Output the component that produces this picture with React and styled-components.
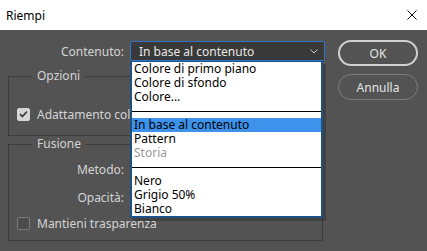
import React from 'react';
import styled, { createGlobalStyle } from 'styled-components';

const GlobalStyle = createGlobalStyle`
  html, body {
    margin: 0;
    padding: 0;
    background: #535353;
  }
  body {
    font-family: 'Noto Sans', 'Open Sans', sans-serif;
    font-size: 12px;
  }
`;

const Dialog = styled.div`
  position: relative;
  width: 427px;
  height: 251px;
  background: #535353;
  overflow: hidden;
`;

const TitleBar = styled.div`
  display: flex;
  align-items: center;
  justify-content: space-between;
  height: 30px;
  padding: 0 10px 0 6px;
  background: #ffffff;
  color: #000;
  font-size: 12px;
`;

const CloseButton = styled.div`
  display: flex;
  width: 10px;
  height: 10px;
`;

const Body = styled.div`
  display: flex;
  flex-direction: row;
  align-items: flex-start;
`;

const FormColumn = styled.div`
  display: flex;
  flex-direction: column;
  width: 315px;
  padding: 11px 0 0 8px;
`;

const Row = styled.div`
  display: flex;
  flex-direction: row;
  align-items: center;
  height: ${({ h }) => h || 20}px;
  margin-top: ${({ mt }) => mt || 0}px;
`;

const Label = styled.div`
  width: ${({ w }) => w || 122}px;
  padding-right: 6px;
  box-sizing: border-box;
  text-align: right;
  color: #d4d4d4;
  white-space: nowrap;
`;

const Select = styled.div`
  display: flex;
  align-items: center;
  justify-content: space-between;
  box-sizing: border-box;
  width: 195px;
  height: 20px;
  margin-right: -10px;
  padding: 0 6px 0 8px;
  background: #393939;
  border: 1px solid #2f74c8;
  border-radius: 2px;
  color: #e8e8e8;
`;

const Group = styled.div`
  margin-top: ${({ mt }) => mt || 0}px;
  padding: 0 0 0 8px;
  height: ${({ h }) => h}px;
  box-sizing: border-box;
  border: 1px solid #3c3c3c;
  display: flex;
  flex-direction: column;
  align-items: flex-start;
`;

const Legend = styled.span`
  margin: -8px 0 0 15px;
  padding: 0 5px;
  background: #535353;
  color: #d4d4d4;
  line-height: 14px;
`;

const CheckRow = styled.label`
  display: flex;
  align-items: center;
  gap: 7px;
  height: 16px;
  color: #d4d4d4;
  white-space: nowrap;
  margin-top: ${({ mt }) => mt || 0}px;
`;

const Box = styled.span`
  display: flex;
  align-items: center;
  justify-content: center;
  width: 13px;
  height: 13px;
  box-sizing: border-box;
  border-radius: 2px;
  background: ${({ checked }) => (checked ? '#d6d6d6' : '#4b4b4b')};
  border: 1px solid ${({ checked }) => (checked ? '#d6d6d6' : '#7a7a7a')};
`;

const ButtonColumn = styled.div`
  display: flex;
  flex-direction: column;
  gap: 8px;
  padding: 10px 0 0 15px;
`;

const Button = styled.div`
  display: flex;
  align-items: center;
  justify-content: center;
  box-sizing: border-box;
  width: 80px;
  height: 26px;
  border-radius: 13px;
  border: ${({ primary }) => (primary ? '2px solid #d0d0d0' : '1px solid #7c7c7c')};
  color: #e6e6e6;
  font-size: 12px;
`;

const Menu = styled.div`
  position: absolute;
  left: 130px;
  top: 61px;
  width: 193px;
  box-sizing: border-box;
  background: #ffffff;
  border: 2px solid #1d5286;
  border-top-width: 1px;
  box-shadow: 3px 3px 0 rgba(0, 0, 0, 0.22);
  display: flex;
  flex-direction: column;
`;

const Item = styled.div`
  height: 14px;
  line-height: 14px;
  padding-left: 2px;
  color: ${({ disabled }) => (disabled ? '#9a9a9a' : '#000')};
  background: ${({ active }) => (active ? '#3d92ec' : 'transparent')};
  white-space: nowrap;
`;

const Separator = styled.div`
  height: 14px;
  display: flex;
  align-items: center;
  &::after {
    content: '';
    flex: 1;
    height: 1px;
    background: #000;
  }
`;

const Check = () => (
  <svg width="9" height="8" viewBox="0 0 9 8">
    <path d="M1 4.2 L3.4 6.5 L8 1.5" fill="none" stroke="#3a3a3a" strokeWidth="1.8" />
  </svg>
);

const Chevron = () => (
  <svg width="8" height="5" viewBox="0 0 8 5">
    <path d="M0.5 0.5 L4 4 L7.5 0.5" fill="none" stroke="#c8c8c8" strokeWidth="1" />
  </svg>
);

export default function App() {
  return (
    <>
      <GlobalStyle />
      <Dialog>
        <TitleBar>
          <span>Riempi</span>
          <CloseButton>
            <svg width="10" height="10" viewBox="0 0 10 10">
              <path d="M0.5 0.5 L9.5 9.5 M9.5 0.5 L0.5 9.5" stroke="#111" strokeWidth="1" />
            </svg>
          </CloseButton>
        </TitleBar>
        <Body>
          <FormColumn>
            <Row>
              <Label>Contenuto:</Label>
              <Select>
                <span>In base al contenuto</span>
                <Chevron />
              </Select>
            </Row>
            <Group mt={15} h={60}>
              <Legend>Opzioni</Legend>
              <CheckRow mt={23}>
                <Box checked>
                  <Check />
                </Box>
                Adattamento colore
              </CheckRow>
            </Group>
            <Group mt={8} h={97}>
              <Legend>Fusione</Legend>
              <Row h={28} mt={4}>
                <Label w={113}>Metodo:</Label>
              </Row>
              <Row h={28}>
                <Label w={113}>Opacità:</Label>
              </Row>
              <CheckRow mt={4}>
                <Box />
                Mantieni trasparenza
              </CheckRow>
            </Group>
          </FormColumn>
          <ButtonColumn>
            <Button primary>OK</Button>
            <Button>Annulla</Button>
          </ButtonColumn>
        </Body>
        <Menu>
          <Item>Colore di primo piano</Item>
          <Item>Colore di sfondo</Item>
          <Item>Colore...</Item>
          <Separator />
          <Item active>In base al contenuto</Item>
          <Item>Pattern</Item>
          <Item disabled>Storia</Item>
          <Separator />
          <Item>Nero</Item>
          <Item>Grigio 50%</Item>
          <Item>Bianco</Item>
        </Menu>
      </Dialog>
    </>
  );
}
